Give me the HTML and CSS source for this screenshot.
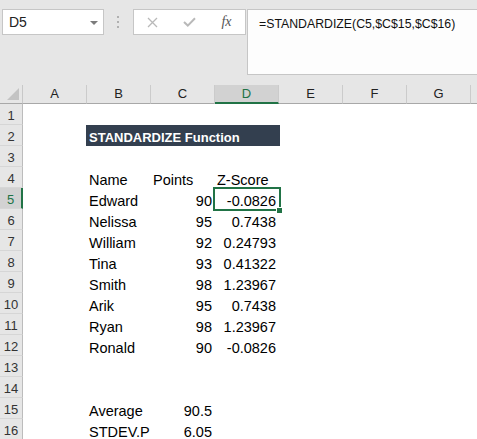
FILE: index.html
```html
<!DOCTYPE html>
<html>
<head>
<meta charset="utf-8">
<link rel="stylesheet" href="styles.css">
</head>
<body>
<div class="top">
  <div class="namebox">D5<span class="caret"></span></div>
  <div class="dots"><i></i><i></i><i></i></div>
  <div class="btns">
    <div class="slot"><svg width="11" height="11" viewBox="0 0 11 11"><path d="M1 1L10 10M10 1L1 10" stroke="#b9b9b9" stroke-width="1.3" fill="none"/></svg></div>
    <div class="slot"><svg width="13" height="10" viewBox="0 0 13 10"><path d="M1 5L4.8 8.6L12 1.2" stroke="#b9b9b9" stroke-width="2" fill="none"/></svg></div>
    <div class="slot fx">fx</div>
  </div>
  <div class="fbox">=STANDARDIZE(C5,$C$15,$C$16)</div>
</div>
<div class="sheet">
  <div class="hdr">
    <div class="corner"><span class="tri"></span></div>
    <div class="ch">A</div><div class="ch">B</div><div class="ch">C</div><div class="ch sel">D</div><div class="ch">E</div><div class="ch">F</div><div class="ch">G</div><div class="ch last"></div>
  </div>
  <div class="row"><div class="rh">1</div></div>
  <div class="row"><div class="rh">2</div><div class="c"></div><div class="c title">STANDARDIZE Function</div></div>
  <div class="row"><div class="rh">3</div></div>
  <div class="row"><div class="rh">4</div><div class="c"></div><div class="c">Name</div><div class="c">Points</div><div class="c">Z-Score</div></div>
  <div class="row"><div class="rh cur">5</div><div class="c"></div><div class="c">Edward</div><div class="c num">90</div><div class="c num active">-0.0826</div></div>
  <div class="row"><div class="rh">6</div><div class="c"></div><div class="c">Nelissa</div><div class="c num">95</div><div class="c num">0.7438</div></div>
  <div class="row"><div class="rh">7</div><div class="c"></div><div class="c">William</div><div class="c num">92</div><div class="c num">0.24793</div></div>
  <div class="row"><div class="rh">8</div><div class="c"></div><div class="c">Tina</div><div class="c num">93</div><div class="c num">0.41322</div></div>
  <div class="row"><div class="rh">9</div><div class="c"></div><div class="c">Smith</div><div class="c num">98</div><div class="c num">1.23967</div></div>
  <div class="row"><div class="rh">10</div><div class="c"></div><div class="c">Arik</div><div class="c num">95</div><div class="c num">0.7438</div></div>
  <div class="row"><div class="rh">11</div><div class="c"></div><div class="c">Ryan</div><div class="c num">98</div><div class="c num">1.23967</div></div>
  <div class="row"><div class="rh">12</div><div class="c"></div><div class="c">Ronald</div><div class="c num">90</div><div class="c num">-0.0826</div></div>
  <div class="row"><div class="rh">13</div></div>
  <div class="row"><div class="rh">14</div></div>
  <div class="row"><div class="rh">15</div><div class="c"></div><div class="c">Average</div><div class="c num">90.5</div></div>
  <div class="row"><div class="rh">16</div><div class="c"></div><div class="c">STDEV.P</div><div class="c num">6.05</div></div>
</div>
</body>
</html>
```
FILE: styles.css
```css
html, body {
  margin: 0;
  padding: 0;
  background: #ffffff;
  overflow: hidden;
  font-family: "Liberation Sans", Arial, sans-serif;
}
.top {
  height: 85px;
  box-sizing: border-box;
  background: #e6e6e6;
  display: flex;
  align-items: flex-start;
  padding-top: 9px;
}
.namebox {
  position: relative;
  margin-left: 2px;
  width: 102px;
  height: 26px;
  box-sizing: border-box;
  background: #ffffff;
  border: 1px solid #c6c6c6;
  font-size: 14px;
  line-height: 23px;
  padding-top: 1px;
  padding-left: 6px;
  color: #222;
}
.caret {
  position: absolute;
  right: 5px;
  top: 11px;
  width: 0;
  height: 0;
  border-left: 4px solid transparent;
  border-right: 4px solid transparent;
  border-top: 4px solid #7c7c7c;
}
.dots {
  width: 28px;
  margin-right: 1px;
  display: flex;
  flex-direction: column;
  align-items: center;
  gap: 3px;
  padding-top: 7px;
}
.dots i {
  display: block;
  width: 2px;
  height: 2px;
  background: #b0b0b0;
}
.btns {
  width: 113px;
  height: 26px;
  box-sizing: border-box;
  background: #ffffff;
  border: 1px solid #c6c6c6;
  display: flex;
}
.slot {
  width: 37px;
  height: 24px;
  display: flex;
  align-items: center;
  justify-content: center;
}
.fx {
  font-family: "Liberation Serif", "Times New Roman", serif;
  font-style: italic;
  font-size: 14px;
  color: #555;
}
.fbox {
  flex: 1;
  margin-left: 1px;
  height: 66px;
  box-sizing: border-box;
  background: #fdfdfd;
  border: 1px solid #c6c6c6;
  border-right: none;
  padding-left: 11px;
  padding-top: 6px;
  font-size: 12.3px;
  line-height: 16px;
  color: #111;
  white-space: nowrap;
}
.sheet {
  background: #ffffff;
}
.hdr, .row {
  display: grid;
  grid-template-columns: 23px repeat(7, 64px) 1fr;
}
.hdr {
  height: 19px;
  background: #e6e6e6;
}
.corner {
  position: relative;
  box-sizing: border-box;
  border-right: 1px solid #c8c8c8;
  border-bottom: 1px solid #a8a8a8;
}
.tri {
  position: absolute;
  left: 7px;
  top: 3px;
  width: 0;
  height: 0;
  border-left: 12px solid transparent;
  border-bottom: 12px solid #c3c3c3;
}
.ch {
  box-sizing: border-box;
  border-right: 1px solid #cbcbcb;
  border-bottom: 1px solid #a8a8a8;
  display: flex;
  align-items: flex-end;
  justify-content: center;
  font-size: 13px;
  line-height: 15px;
  padding-bottom: 2px;
  color: #222;
}
.ch.sel {
  background: #d2d2d2;
  border-bottom: 2px solid #217346;
  padding-bottom: 1px;
  color: #217346;
}
.ch.last {
  border-right: none;
}
.row {
  height: 21px;
}
.rh {
  box-sizing: border-box;
  background: #e6e6e6;
  border-right: 1px solid #bcbcbc;
  border-bottom: 1px solid #d6d6d6;
  display: flex;
  align-items: flex-end;
  justify-content: center;
  font-size: 13px;
  line-height: 15px;
  padding-bottom: 1px;
  color: #333;
}
.rh.cur {
  background: #d2d2d2;
  border-right: 2px solid #217346;
  color: #217346;
}
.c {
  display: flex;
  align-items: flex-end;
  padding-left: 2px;
  font-size: 14.5px;
  line-height: 16px;
  color: #000;
  white-space: nowrap;
  min-width: 0;
}
.c.num {
  justify-content: flex-end;
  padding-left: 0;
  padding-right: 3px;
}
.c.title {
  grid-column: span 3;
  margin-left: -1px;
  margin-right: -1px;
  padding-left: 3px;
  background: #333f4f;
  color: #ffffff;
  font-weight: bold;
  font-size: 13px;
  line-height: 15px;
  padding-bottom: 1px;
}
.c.active {
  position: relative;
}
.c.active::before {
  content: "";
  position: absolute;
  left: -2px;
  top: -1px;
  right: -2px;
  bottom: -2px;
  border: 2px solid #217346;
}
.c.active::after {
  content: "";
  position: absolute;
  right: -3px;
  bottom: -4px;
  width: 5px;
  height: 5px;
  background: #217346;
  border-left: 1px solid #ffffff;
  border-top: 1px solid #ffffff;
}
```
